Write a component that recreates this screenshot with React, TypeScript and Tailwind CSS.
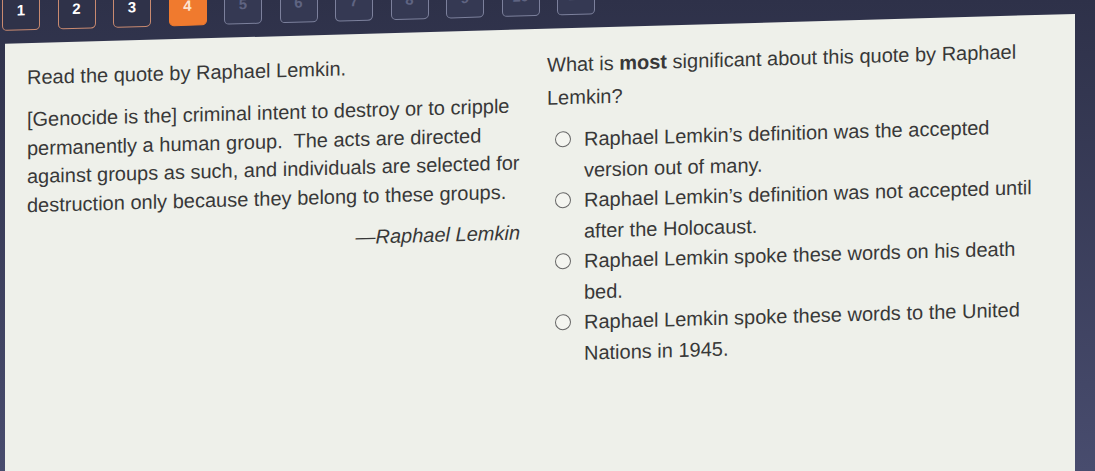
import React from "react";

const steps = [
  { n: "1", state: "done" },
  { n: "2", state: "done" },
  { n: "3", state: "done" },
  { n: "4", state: "current" },
  { n: "5", state: "todo" },
  { n: "6", state: "todo" },
  { n: "7", state: "todo" },
  { n: "8", state: "todo" },
  { n: "9", state: "todo" },
  { n: "10", state: "todo" },
  { n: "11", state: "todo" },
];

const options = [
  "Raphael Lemkin’s definition was the accepted version out of many.",
  "Raphael Lemkin’s definition was not accepted until after the Holocaust.",
  "Raphael Lemkin spoke these words on his death bed.",
  "Raphael Lemkin spoke these words to the United Nations in 1945.",
];

function StepButton({ n, state }: { n: string; state: string }) {
  const cls =
    state === "current"
      ? "bg-[#f07a2e] border-[#f07a2e] text-[#fde3cf]"
      : state === "done"
      ? "bg-[#2f3249] border-[#c98a70] text-white"
      : "bg-[#353953] border-[#7c809c] text-[#5f6482]";
  return (
    <div
      className={`w-[38px] h-[40px] shrink-0 rounded-[5px] border-[1.5px] flex items-center justify-center text-[15px] font-bold ${cls}`}
    >
      {n}
    </div>
  );
}

export default function App() {
  return (
    <div className="w-[1095px] h-[471px] overflow-hidden bg-gradient-to-b from-[#2e3149] to-[#484c6e] font-['Liberation_Sans',Arial,sans-serif]">
      <div className="origin-top-left skew-y-[-1.6deg]">
        {/* Question navigation */}
        <div className="h-[44px] flex items-start gap-[17.5px] pl-[2px] -mt-[9px]">
          {steps.map((s) => (
            <StepButton key={s.n} n={s.n} state={s.state} />
          ))}
        </div>

        {/* Question card */}
        <div className="ml-[5px] w-[1070px] h-[520px] mt-[9px] bg-[#eef0ea] flex pt-[19px] pl-[22px] text-[20px] text-[#383838]">
          <div className="w-[500px] pt-[1px] shrink-0">
            <p className="leading-[28px]">Read the quote by Raphael Lemkin.</p>
            <p className="mt-[14px] leading-[28.5px] whitespace-pre-wrap">
              {"[Genocide is the] criminal intent to destroy or to cripple permanently a human group.  The acts are directed against groups as such, and individuals are selected for destruction only because they belong to these groups."}
            </p>
            <p className="mt-[13px] leading-[28px] text-right pr-[7px] italic">
              —Raphael Lemkin
            </p>
          </div>

          <div className="ml-[20px] w-[500px] pt-[1px]">
            <p className="leading-[33px] w-[490px]">
              What is <span className="font-bold">most</span> significant about this quote by Raphael Lemkin?
            </p>
            <div className="mt-[10px] flex flex-col">
              {options.map((o) => (
                <label key={o} className="flex items-start ml-[8px]">
                  <span className="h-[30px] flex items-center shrink-0">
                    <span className="w-[16px] h-[16px] rounded-full border-[1.5px] border-[#666] bg-[#f4f5f0]" />
                  </span>
                  <span className="ml-[13px] w-[460px] leading-[30.5px]">{o}</span>
                </label>
              ))}
            </div>
          </div>
        </div>
      </div>
    </div>
  );
}
